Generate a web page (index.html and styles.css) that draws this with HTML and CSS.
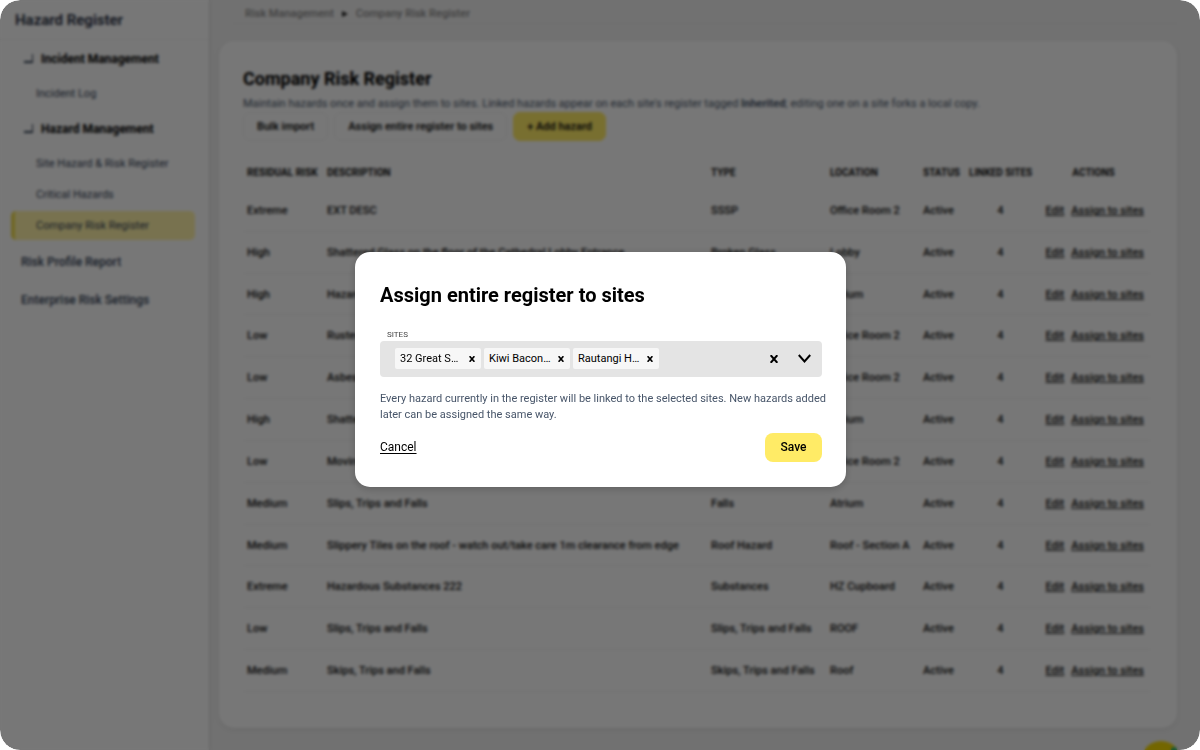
FILE: index.html
```
<!DOCTYPE html>
<html lang="en">
<head>
    <meta charset="UTF-8">
    <meta name="viewport" content="width=device-width, initial-scale=1.0">
    <title>Company Risk Register</title>
    <link rel="stylesheet" href="styles.css">
</head>
<body>
    <div class="window">
        <div class="app">
            <!-- Sidebar -->
            <aside class="sidebar">
                <div class="sidebar-title">Hazard Register</div>
                <nav class="nav">
                    <button class="nav-group" type="button"><span class="corner"></span>Incident Management</button>
                    <a class="nav-sub" href="#">Incident Log</a>
                    <button class="nav-group" type="button"><span class="corner"></span>Hazard Management</button>
                    <a class="nav-sub" href="#">Site Hazard &amp; Risk Register</a>
                    <a class="nav-sub" href="#">Critical Hazards</a>
                    <a class="nav-sub active" href="#">Company Risk Register</a>
                    <a class="nav-item" href="#">Risk Profile Report</a>
                    <a class="nav-item" href="#">Enterprise Risk Settings</a>
                </nav>
            </aside>

            <!-- Page -->
            <main class="main">
                <div class="breadcrumb">
                    <a href="#">Risk Management</a>
                    <svg width="6" height="6" viewBox="0 0 6 6"><path d="M0 0L6 3L0 6Z" fill="#222"/></svg>
                    <a href="#">Company Risk Register</a>
                </div>
                <section class="card">
                    <h1>Company Risk Register</h1>
                    <p class="intro">Maintain hazards once and assign them to sites. Linked hazards appear on each site's register tagged <strong>Inherited</strong>; editing one on a site forks a local copy.</p>
                    <div class="toolbar">
                        <button class="btn" type="button">Bulk import</button>
                        <button class="btn" type="button">Assign entire register to sites</button>
                        <button class="btn primary" type="button">+ Add hazard</button>
                    </div>
                    <table class="register">
                        <colgroup>
                            <col class="col-risk"><col class="col-desc"><col class="col-type"><col class="col-loc"><col class="col-status"><col class="col-linked"><col class="col-actions">
                        </colgroup>
                        <thead>
                            <tr><th>RESIDUAL RISK</th><th>DESCRIPTION</th><th>TYPE</th><th>LOCATION</th><th>STATUS</th><th class="mid">LINKED SITES</th><th class="mid">ACTIONS</th></tr>
                        </thead>
                        <tbody>
                            <tr><td>Extreme</td><td>EXT DESC</td><td>SSSP</td><td>Office Room 2</td><td>Active</td><td class="mid">4</td><td class="actions"><a href="#">Edit</a><a href="#">Assign to sites</a></td></tr>
                            <tr><td>High</td><td>Shattered Glass on the floor of the Cathedral Lobby Entrance</td><td>Broken Glass</td><td>Lobby</td><td>Active</td><td class="mid">4</td><td class="actions"><a href="#">Edit</a><a href="#">Assign to sites</a></td></tr>
                            <tr><td>High</td><td>Hazard</td><td></td><td>Atrium</td><td>Active</td><td class="mid">4</td><td class="actions"><a href="#">Edit</a><a href="#">Assign to sites</a></td></tr>
                            <tr><td>Low</td><td>Rusted</td><td></td><td>Office Room 2</td><td>Active</td><td class="mid">4</td><td class="actions"><a href="#">Edit</a><a href="#">Assign to sites</a></td></tr>
                            <tr><td>Low</td><td>Asbestos</td><td></td><td>Office Room 2</td><td>Active</td><td class="mid">4</td><td class="actions"><a href="#">Edit</a><a href="#">Assign to sites</a></td></tr>
                            <tr><td>High</td><td>Shatter</td><td></td><td>Atrium</td><td>Active</td><td class="mid">4</td><td class="actions"><a href="#">Edit</a><a href="#">Assign to sites</a></td></tr>
                            <tr><td>Low</td><td>Moving</td><td></td><td>Office Room 2</td><td>Active</td><td class="mid">4</td><td class="actions"><a href="#">Edit</a><a href="#">Assign to sites</a></td></tr>
                            <tr><td>Medium</td><td>Slips, Trips and Falls</td><td>Falls</td><td>Atrium</td><td>Active</td><td class="mid">4</td><td class="actions"><a href="#">Edit</a><a href="#">Assign to sites</a></td></tr>
                            <tr><td>Medium</td><td>Slippery Tiles on the roof - watch out/take care 1m clearance from edge</td><td>Roof Hazard</td><td>Roof - Section A</td><td>Active</td><td class="mid">4</td><td class="actions"><a href="#">Edit</a><a href="#">Assign to sites</a></td></tr>
                            <tr><td>Extreme</td><td>Hazardous Substances 222</td><td>Substances</td><td>HZ Cupboard</td><td>Active</td><td class="mid">4</td><td class="actions"><a href="#">Edit</a><a href="#">Assign to sites</a></td></tr>
                            <tr><td>Low</td><td>Slips, Trips and Falls</td><td>Slips, Trips and Falls</td><td>ROOF</td><td>Active</td><td class="mid">4</td><td class="actions"><a href="#">Edit</a><a href="#">Assign to sites</a></td></tr>
                            <tr><td>Medium</td><td>Skips, Trips and Falls</td><td>Skips, Trips and Falls</td><td>Roof</td><td>Active</td><td class="mid">4</td><td class="actions"><a href="#">Edit</a><a href="#">Assign to sites</a></td></tr>
                        </tbody>
                    </table>
                </section>
            </main>
            <button class="help" type="button" aria-label="Help"><span class="help-dot"></span></button>
        </div>

        <!-- Assign modal -->
        <div class="overlay">
            <form class="modal" role="dialog" aria-labelledby="modal-title">
                <h2 id="modal-title">Assign entire register to sites</h2>
                <label class="field-label" for="sites">SITES</label>
                <div class="multiselect">
                    <span class="chip">32 Great S…<button type="button" aria-label="Remove"><svg width="6" height="6" viewBox="0 0 6 6"><path d="M.6 .2L5.4 5.8M5.4 .2L.6 5.8"/></svg></button></span>
                    <span class="chip">Kiwi Bacon…<button type="button" aria-label="Remove"><svg width="6" height="6" viewBox="0 0 6 6"><path d="M.6 .2L5.4 5.8M5.4 .2L.6 5.8"/></svg></button></span>
                    <span class="chip">Rautangi H…<button type="button" aria-label="Remove"><svg width="6" height="6" viewBox="0 0 6 6"><path d="M.6 .2L5.4 5.8M5.4 .2L.6 5.8"/></svg></button></span>
                    <input id="sites" type="text" autocomplete="off">
                    <button class="clear" type="button" aria-label="Clear all"><svg width="8" height="8" viewBox="0 0 8 8"><path d="M.7 .2L7.3 7.8M7.3 .2L.7 7.8"/></svg></button>
                    <button class="toggle" type="button" aria-label="Open list"><svg width="13" height="9" viewBox="0 0 13 9"><path d="M.8 1L6.5 7.4L12.2 1"/></svg></button>
                </div>
                <p class="hint">Every hazard currently in the register will be linked to the selected sites. New hazards added<br>later can be assigned the same way.</p>
                <div class="modal-actions">
                    <button class="cancel" type="button">Cancel</button>
                    <button class="save" type="submit">Save</button>
                </div>
            </form>
        </div>
    </div>
</body>
</html>
```
FILE: styles.css
```
* {
    box-sizing: border-box;
}

body {
    margin: 0;
    background: #fff;
    color: #111;
    font-family: Roboto, "Liberation Sans", sans-serif;
    font-size: 12px;
}

button {
    padding: 0;
    border: 0;
    background: none;
    color: inherit;
    font-family: inherit;
    font-size: inherit;
}

a {
    color: inherit;
}

.window {
    position: relative;
    height: 100vh;
    overflow: hidden;
    border-radius: 20px;
}

.app {
    display: flex;
    height: 100%;
    background: #f1f1f1;
}

/* Sidebar */
.sidebar {
    width: 209px;
    flex-shrink: 0;
    background: #fdfdfd;
    box-shadow: 0 0 4px rgba(0, 0, 0, 0.2);
}

.sidebar-title {
    height: 40px;
    padding: 10px 15px;
    border-bottom: 1px solid #f3f3f3;
    color: #1e293b;
    font-size: 15px;
    line-height: 20px;
    font-weight: 600;
}

.nav {
    display: flex;
    flex-direction: column;
    gap: 2px;
    padding: 0 14px 0 11px;
}

.nav-group {
    display: flex;
    align-items: center;
    gap: 8px;
    height: 37px;
    padding-left: 13px;
    color: #000;
    font-size: 12px;
    font-weight: 700;
}

.corner {
    width: 9px;
    height: 9px;
    border-right: 1px solid #334155;
    border-bottom: 2px solid #334155;
}

.nav-sub {
    height: 29px;
    padding-left: 25px;
    border-radius: 5px;
    color: #334155;
    font-size: 11px;
    line-height: 29px;
    text-decoration: none;
}

.nav-sub.active {
    border-left: 4px solid #f0dc50;
    padding-left: 21px;
    background: #fff3a8;
}

.nav-item {
    height: 36px;
    padding-left: 10px;
    color: #334155;
    font-size: 12px;
    line-height: 40px;
    font-weight: 500;
    text-decoration: none;
}

/* Page */
.main {
    display: flex;
    flex: 1;
    flex-direction: column;
    min-width: 0;
    padding: 0 23px 22px 10px;
}

.breadcrumb {
    display: flex;
    align-items: center;
    gap: 8px;
    height: 24px;
    margin: 0 0 17px 14px;
    padding: 4px 0 0 12px;
    border-bottom: 1px solid #e6e6e6;
    color: #888;
    font-size: 11px;
    font-weight: 500;
}

.breadcrumb a {
    text-decoration: none;
}

.card {
    display: flex;
    flex: 1;
    flex-direction: column;
    padding: 25px 26px 36px 24px;
    border-radius: 15px;
    background: #fdfdfd;
    box-shadow: 0 2px 6px rgba(0, 0, 0, 0.08);
}

h1 {
    margin: 0;
    color: #000;
    font-size: 18px;
    line-height: 26px;
    font-weight: 700;
}

.intro {
    margin: 4px 0 0;
    color: #475569;
    font-size: 11px;
    line-height: 16px;
    white-space: nowrap;
}

.toolbar {
    display: flex;
    gap: 6px;
    margin-bottom: 12px;
}

.btn {
    height: 29px;
    padding: 0 13px;
    border: 1px solid #eee;
    border-radius: 7px;
    font-size: 11px;
    font-weight: 600;
}

.btn.primary {
    border-color: #ffeb66;
    background: #ffeb66;
}

.register {
    flex: 1;
    width: 100%;
    border-collapse: collapse;
    table-layout: fixed;
    white-space: nowrap;
}

.col-risk { width: 80px; }
.col-type { width: 119px; }
.col-loc { width: 93px; }
.col-status { width: 46px; }
.col-linked { width: 71px; }
.col-actions { width: 115px; }

th, td {
    padding: 0 4px;
    text-align: left;
}

th {
    height: 38px;
    font-size: 10px;
    font-weight: 700;
}

td {
    border-bottom: 1px solid #efefef;
    font-size: 11px;
    font-weight: 500;
}

.register .mid {
    text-align: center;
}

.register .actions {
    padding-right: 7px;
    text-align: right;
}

.actions a + a {
    margin-left: 7px;
}

.help {
    position: absolute;
    right: 19px;
    bottom: -31px;
    width: 40px;
    height: 40px;
    border-radius: 50%;
    background: #f5d800;
}

.help-dot {
    position: absolute;
    top: 6px;
    right: 4px;
    width: 6px;
    height: 6px;
    border-radius: 50%;
    background: #2eb872;
}

/* Modal */
.overlay {
    position: absolute;
    inset: 0;
    display: flex;
    align-items: center;
    justify-content: center;
    padding: 0 0 12px 1px;
    border-radius: 20px;
    background: rgba(0, 0, 0, 0.53);
    backdrop-filter: blur(1.5px);
}

.modal {
    width: 491px;
    padding: 29px 24px 25px 25px;
    border-radius: 15px;
    background: #fff;
    box-shadow: 0 2px 8px rgba(0, 0, 0, 0.2);
    color: #000;
}

.modal h2 {
    margin: 0 0 20px;
    font-size: 20px;
    line-height: 28px;
    font-weight: 700;
}

.field-label {
    display: block;
    padding-left: 7px;
    color: #444;
    font-size: 8px;
    line-height: 12px;
}

.multiselect {
    display: flex;
    align-items: center;
    gap: 3px;
    height: 36px;
    padding: 0 11px 0 15px;
    border-radius: 4px;
    background: #e4e4e4;
}

.multiselect svg {
    display: block;
    fill: none;
    stroke: #000;
    stroke-width: 2;
}

.chip {
    display: flex;
    align-items: center;
    justify-content: space-between;
    width: 86px;
    height: 21px;
    padding: 0 6px 0 5px;
    border-radius: 2px;
    background: #f7f7f7;
    font-size: 11px;
}

.multiselect .chip svg {
    stroke-width: 1.6;
}

.multiselect input {
    flex: 1;
    min-width: 0;
    border: 0;
    outline: 0;
    background: none;
    font: inherit;
}

.toggle {
    margin-left: 17px;
}

.hint {
    margin: 14px 0 10px;
    color: #475569;
    font-size: 11px;
    line-height: 16px;
    white-space: nowrap;
}

.modal-actions {
    display: flex;
    align-items: center;
    justify-content: space-between;
}

.cancel {
    font-size: 12px;
    text-decoration: underline;
    text-underline-offset: 2px;
}

.save {
    width: 57px;
    height: 29px;
    border-radius: 8px;
    background: #ffeb66;
    font-size: 12px;
    font-weight: 500;
}
```
